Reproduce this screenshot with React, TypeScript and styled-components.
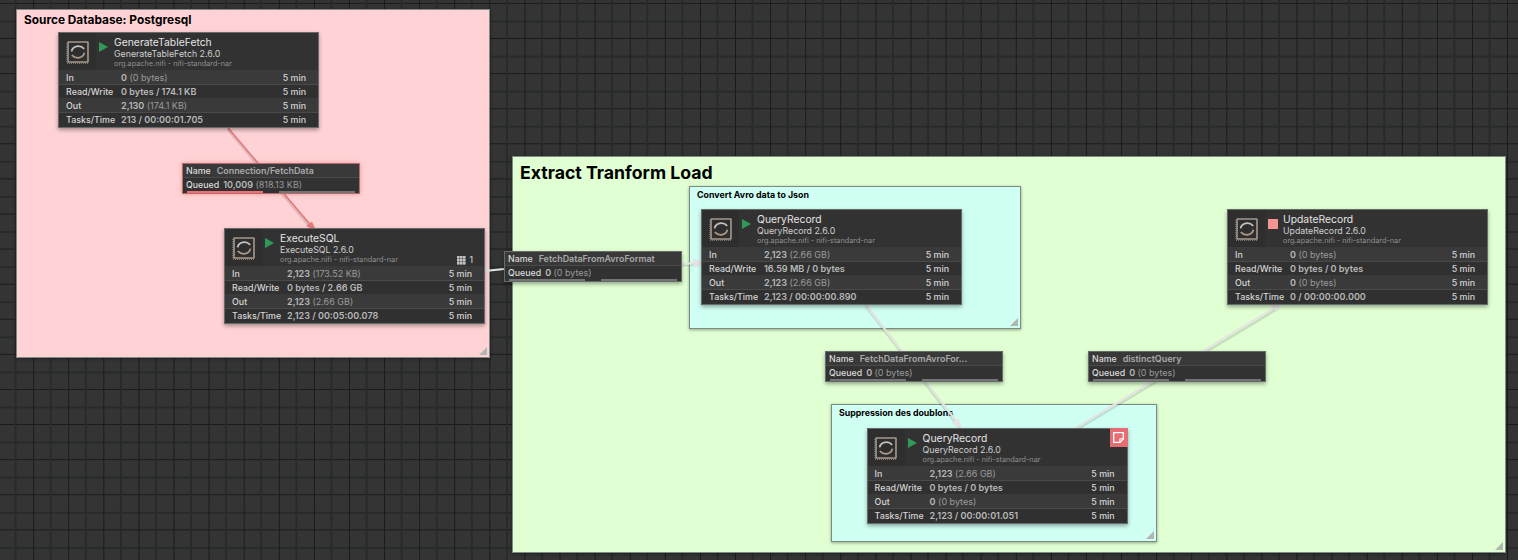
import React from "react";
import styled, { createGlobalStyle } from "styled-components";

const Global = createGlobalStyle`
  html, body { margin: 0; padding: 0; background: #333; }
  body { font-family: Inter, "Liberation Sans", sans-serif; }
  svg { display: block; }
`;

const Canvas = styled.div`
  position: relative;
  width: 1518px;
  height: 560px;
  overflow: hidden;
  background-color: #343434;
  background-image:
    linear-gradient(90deg, transparent 33px, #171c1a 33px, #171c1a 34px, transparent 34px),
    linear-gradient(90deg, transparent 15px, #262b29 15px, #262b29 17px, transparent 17px),
    linear-gradient(180deg, transparent 3px, #171c1a 3px, #171c1a 4px, transparent 4px),
    linear-gradient(180deg, transparent 20px, #262b29 20px, #262b29 22px, transparent 22px);
  background-size: 35.1px 100%, 35.1px 100%, 100% 35.1px, 100% 35.1px;
`;

const Group = styled.section<{ $x: number; $y: number; $w: number; $h: number; $bg: string; $pad: string }>`
  position: absolute;
  left: ${(p) => p.$x}px;
  top: ${(p) => p.$y}px;
  width: ${(p) => p.$w}px;
  height: ${(p) => p.$h}px;
  box-sizing: border-box;
  padding: ${(p) => p.$pad};
  background: ${(p) => p.$bg};
  border: 1px solid #7f8a85;
  box-shadow: 0 1px 3px rgba(0, 0, 0, 0.35);
`;

const GroupTitle = styled.div<{ $size: number }>`
  font-size: ${(p) => p.$size}px;
  font-weight: 700;
  line-height: 1.2;
  color: #000;
  white-space: nowrap;
`;

const Handle = styled.svg`
  position: absolute;
  right: 2px;
  bottom: 2px;
  width: 8px;
  height: 8px;
`;

const Links = styled.svg`
  position: absolute;
  left: 0;
  top: 0;
  width: 1518px;
  height: 560px;
`;

const Processor = styled.article<{ $x: number; $y: number }>`
  position: absolute;
  left: ${(p) => p.$x}px;
  top: ${(p) => p.$y}px;
  width: 261px;
  height: 96px;
  box-sizing: border-box;
  background: #323232;
  border: 1px solid #646b69;
  box-shadow: 0 2px 4px rgba(0, 0, 0, 0.35);
  display: flex;
  flex-direction: column;
  color: #d6d6d6;
`;

const Head = styled.header`
  position: relative;
  display: flex;
  height: 37px;
  flex: none;
`;

const IconCell = styled.div`
  width: 37px;
  flex: none;
  background: #2e2e2e;
  display: flex;
  align-items: center;
  justify-content: center;
`;

const StateCell = styled.div`
  width: 18px;
  flex: none;
  padding: 9px 0 0 3px;
  box-sizing: border-box;
`;

const Titles = styled.div`
  display: flex;
  flex-direction: column;
  padding-top: 3px;
  white-space: nowrap;
`;

const Name = styled.div`
  font-size: 10.35px;
  line-height: 13px;
  color: #e4e4e4;
`;

const TypeName = styled.div`
  font-size: 8.8px;
  line-height: 10px;
  color: #cfcfcf;
`;

const Bundle = styled.div`
  font-size: 7.3px;
  line-height: 10px;
  color: #8f8f8f;
`;

const Stopped = styled.div`
  width: 9.5px;
  height: 9.5px;
  background: #f39393;
`;

const Tasks = styled.div`
  position: absolute;
  right: 11px;
  bottom: 1px;
  display: flex;
  align-items: center;
  gap: 3px;
  font-size: 8.5px;
  font-weight: 500;
  color: #cfcfcf;
`;

const NoteBadge = styled.div`
  position: absolute;
  right: -1px;
  top: -1px;
  width: 18px;
  height: 19px;
  background: #e76d74;
  display: flex;
  align-items: center;
  justify-content: center;
`;

const Row = styled.div<{ $odd: boolean }>`
  height: 14px;
  box-sizing: border-box;
  display: grid;
  grid-template-columns: 55px 1fr auto;
  align-items: center;
  padding: 0 12px 0 7px;
  font-size: 8.9px;
  font-weight: 500;
  background: ${(p) => (p.$odd ? "#3a3a3a" : "#303030")};
  border-top: 1px solid ${(p) => (p.$odd ? "#3a3a3a" : "#4a4a4a")};
  white-space: nowrap;
`;

const Value = styled.span`
  font-size: 9.05px;
  font-weight: 600;
  color: #b9b9b9;
`;

const Extra = styled.span`
  font-size: 9px;
  font-weight: 400;
  color: #9a9a9a;
`;

const Conn = styled.article<{ $x: number; $y: number; $red?: boolean }>`
  position: absolute;
  left: ${(p) => p.$x}px;
  top: ${(p) => p.$y}px;
  width: 178px;
  height: 31px;
  box-sizing: border-box;
  display: flex;
  flex-direction: column;
  background: #323232;
  border: 1px solid ${(p) => (p.$red ? "#b06c6e" : "#646b69")};
  box-shadow: ${(p) => (p.$red ? "0 0 4px rgba(230, 90, 90, 0.55)" : "0 2px 4px rgba(0, 0, 0, 0.35)")};
  color: #dcdcdc;
  font-size: 8.8px;
  font-weight: 500;
  white-space: nowrap;
`;

const ConnRow = styled.div`
  height: 14px;
  box-sizing: border-box;
  flex: none;
  display: flex;
  gap: 6px;
  align-items: center;
  padding: 0 3px;
  border-bottom: 1px solid #4a4a4a;
  background: #393939;
`;

const QueueRow = styled.div`
  display: flex;
  gap: 4px;
  align-items: center;
  flex: none;
  height: 13px;
  padding: 0 3px;
`;

const ConnName = styled.span`
  color: #a9a9a9;
  font-weight: 600;
  font-size: 8.95px;
`;

const Bars = styled.div`
  display: flex;
  flex: none;
  gap: 16px;
  height: 2px;
  padding: 0 4px;
`;

const Bar = styled.div<{ $filled?: boolean }>`
  width: 76px;
  height: 2px;
  background: ${(p) => (p.$filled ? "#ee6f78" : "#747474")};
`;

const ProcIcon = () => (
  <svg width="24" height="24" viewBox="0 0 24 24" fill="none">
    <rect x="2" y="2" width="20" height="20" rx="0.5" stroke="#a8988a" strokeWidth="1.6" />
    <path d="M1 23.2 H23" stroke="#a8988a" strokeWidth="1" strokeDasharray="1 1" />
    <path d="M0.6 3 V22" stroke="#6f8296" strokeWidth="0.8" strokeDasharray="1 1" />
    <path d="M5.6 11.4 C6.6 5.8 14 4.4 18.2 8.8" stroke="#c4c0bb" strokeWidth="1.8" />
    <path d="M18.4 12.6 C17.4 18.2 10 19.6 5.8 15.2" stroke="#a8988a" strokeWidth="1.8" />
  </svg>
);

const Play = () => (
  <svg width="9" height="10" viewBox="0 0 9 10"><path d="M0 0 L9 5 L0 10 Z" fill="#2f9a57" /></svg>
);

const TaskGrid = () => (
  <svg width="9" height="9" viewBox="0 0 9 9" fill="#c4c4c4">
    {[0, 1, 2].flatMap((r) =>
      [0, 1, 2].map((c) => <rect key={`${r}${c}`} x={c * 3} y={r * 3} width="2.6" height="2.6" />)
    )}
  </svg>
);

const NoteIcon = () => (
  <svg width="11" height="11" viewBox="0 0 11 11" fill="none">
    <path d="M0.7 0.7 H10.3 V7 L7 10.3 H0.7 Z" stroke="#fff" strokeWidth="1.3" />
    <path d="M6.8 10 V6.8 H10" stroke="#fff" strokeWidth="1" />
  </svg>
);

const Corner = () => (
  <Handle viewBox="0 0 8 8"><path d="M8 0 V8 H0 Z" fill="#b0b6b2" /></Handle>
);

type Stat = [string, string, string?];

const Proc = ({ x, y, name, running = true, stats, tasks, note }: {
  x: number; y: number; name: string; running?: boolean; stats: Stat[]; tasks?: boolean; note?: boolean;
}) => (
  <Processor $x={x} $y={y}>
    <Head>
      <IconCell><ProcIcon /></IconCell>
      <StateCell>{running ? <Play /> : <Stopped />}</StateCell>
      <Titles>
        <Name>{name}</Name>
        <TypeName>{name} 2.6.0</TypeName>
        <Bundle>org.apache.nifi - nifi-standard-nar</Bundle>
      </Titles>
      {tasks && <Tasks><TaskGrid />1</Tasks>}
      {note && <NoteBadge><NoteIcon /></NoteBadge>}
    </Head>
    {stats.map(([label, value, extra], i) => (
      <Row key={label} $odd={i % 2 === 0}>
        <span>{label}</span>
        <span><Value>{value}</Value>{extra && <Extra> {extra}</Extra>}</span>
        <span>5 min</span>
      </Row>
    ))}
  </Processor>
);

const Connection = ({ x, y, name, queued, size, full }: {
  x: number; y: number; name: string; queued: string; size: string; full?: boolean;
}) => (
  <Conn $x={x} $y={y} $red={full}>
    <ConnRow><span>Name</span><ConnName>{name}</ConnName></ConnRow>
    <QueueRow><span>Queued</span><span><Value>{queued}</Value> <Extra>{size}</Extra></span></QueueRow>
    <Bars><Bar $filled={full} /><Bar /></Bars>
  </Conn>
);

export default function App() {
  return (
    <Canvas>
      <Global />
      <Group $x={16} $y={9} $w={474} $h={349} $bg="#ffd3d5" $pad="3px 7px">
        <GroupTitle $size={11.85}>Source Database: Postgresql</GroupTitle>
        <Corner />
      </Group>
      <Group $x={512} $y={156} $w={994} $h={397} $bg="#e0ffd2" $pad="5px 7px">
        <GroupTitle $size={17.7}>Extract Tranform Load</GroupTitle>
        <Corner />
      </Group>
      <Group $x={689} $y={186} $w={332} $h={143} $bg="#d0fff4" $pad="3px 7px">
        <GroupTitle $size={8.85}>Convert Avro data to Json</GroupTitle>
        <Corner />
      </Group>
      <Group $x={831} $y={404} $w={326} $h={138} $bg="#d0fff4" $pad="3px 7px">
        <GroupTitle $size={8.8}>Suppression des doublons</GroupTitle>
        <Corner />
      </Group>

      <Links viewBox="0 0 1518 560" fill="none">
        <g stroke="#000" strokeOpacity="0.12" strokeWidth="3.5">
          <path d="M228 129 L314 231" />
          <path d="M682 265 L700 264" />
          <path d="M866 306 L960 428" />
          <path d="M1075 430 L1278 308" />
        </g>
        <path d="M228 128 L314 229" stroke="#e57a7c" strokeWidth="1.6" />
        <path d="M316 230.5 L306 226 L312 221.5 Z" fill="#e57a7c" />
        <g stroke="#e4e4e1" strokeWidth="2.2">
          <path d="M485 271 L504 269" />
          <path d="M682 264 L700 263" />
          <path d="M866 305 L960 426" />
          <path d="M1075 428.5 L1278 306" />
        </g>
        <g fill="#e4e4e1">
          <path d="M703 263 L693 258 L694 268 Z" />
          <path d="M962 429 L952 423.5 L958.5 418 Z" />
          <path d="M1281 304 L1270 306 L1277 312 Z" />
        </g>
      </Links>

      <Proc x={58} y={32} name="GenerateTableFetch" stats={[
        ["In", "0", "(0 bytes)"], ["Read/Write", "0 bytes / 174.1 KB"],
        ["Out", "2,130", "(174.1 KB)"], ["Tasks/Time", "213 / 00:00:01.705"],
      ]} />
      <Proc x={224} y={228} name="ExecuteSQL" tasks stats={[
        ["In", "2,123", "(173.52 KB)"], ["Read/Write", "0 bytes / 2.66 GB"],
        ["Out", "2,123", "(2.66 GB)"], ["Tasks/Time", "2,123 / 00:05:00.078"],
      ]} />
      <Proc x={701} y={209} name="QueryRecord" stats={[
        ["In", "2,123", "(2.66 GB)"], ["Read/Write", "16.59 MB / 0 bytes"],
        ["Out", "2,123", "(2.66 GB)"], ["Tasks/Time", "2,123 / 00:00:00.890"],
      ]} />
      <Proc x={1227} y={209} name="UpdateRecord" running={false} stats={[
        ["In", "0", "(0 bytes)"], ["Read/Write", "0 bytes / 0 bytes"],
        ["Out", "0", "(0 bytes)"], ["Tasks/Time", "0 / 00:00:00.000"],
      ]} />
      <Proc x={866.6} y={428} name="QueryRecord" note stats={[
        ["In", "2,123", "(2.66 GB)"], ["Read/Write", "0 bytes / 0 bytes"],
        ["Out", "0", "(0 bytes)"], ["Tasks/Time", "2,123 / 00:00:01.051"],
      ]} />

      <Connection x={182} y={163} name="Connection/FetchData" queued="10,009" size="(818.13 KB)" full />
      <Connection x={504} y={251} name="FetchDataFromAvroFormat" queued="0" size="(0 bytes)" />
      <Connection x={825} y={351} name="FetchDataFromAvroFor..." queued="0" size="(0 bytes)" />
      <Connection x={1088} y={351} name="distinctQuery" queued="0" size="(0 bytes)" />
    </Canvas>
  );
}
